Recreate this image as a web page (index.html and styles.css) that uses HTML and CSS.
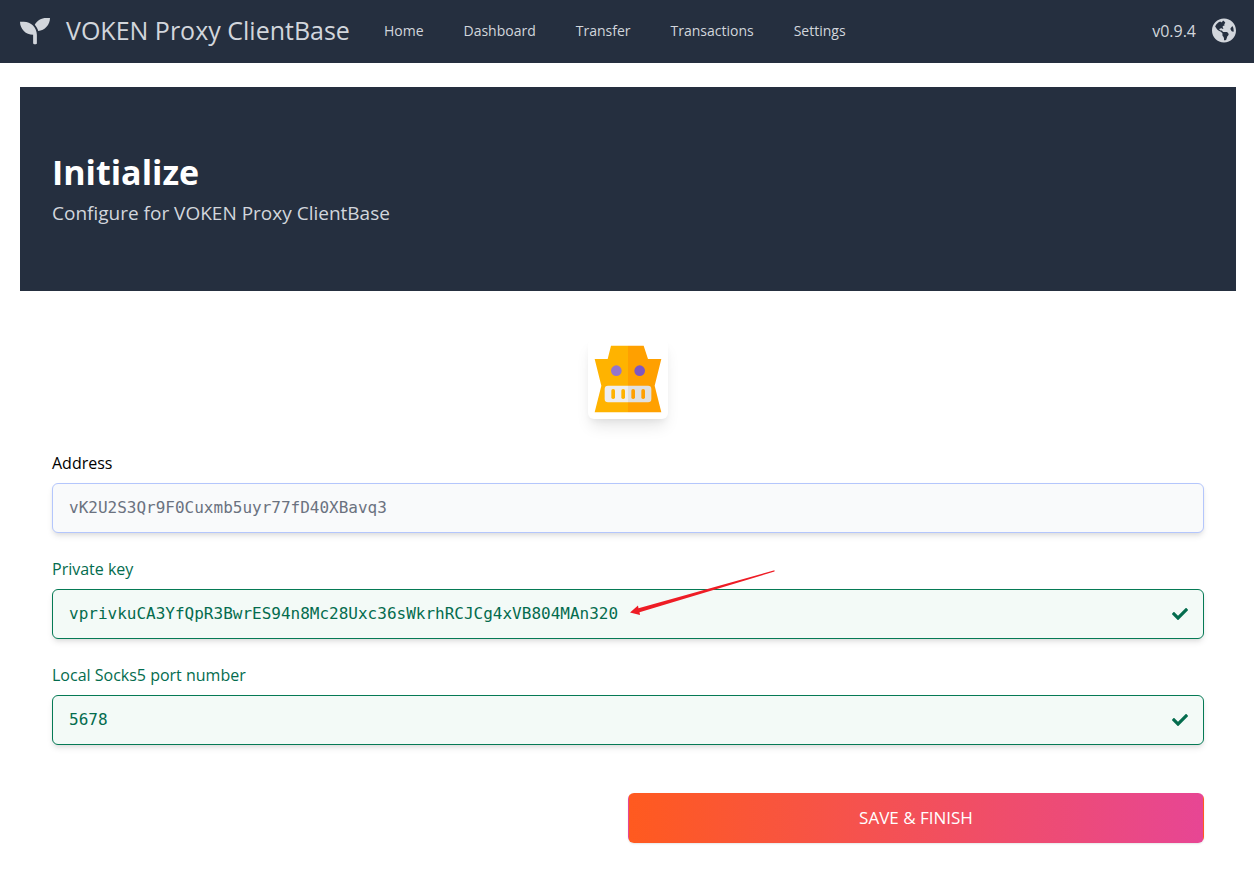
FILE: index.html
```html
<!DOCTYPE html>
<html lang="en">
<head>
<meta charset="utf-8">
<meta name="viewport" content="width=device-width, initial-scale=1">
<title>VOKEN Proxy ClientBase</title>
<link rel="stylesheet" href="styles.css">
</head>
<body>
<header class="navbar">
  <a class="brand" href="#">
    <svg class="brand-icon" viewBox="0 0 512 512" aria-hidden="true"><path fill="currentColor" d="M64 96H0c0 123.7 100.3 224 224 224v144c0 8.800 7.200 16 16 16h32c8.800 0 16-7.200 16-16V320C288 196.300 187.700 96 64 96zm384-64c-84.200 0-157.400 46.500-195.700 115.200 27.700 30.200 48.200 66.900 59 107.600C424 243.100 512 147.900 512 32h-64z"/></svg>
    <span class="brand-name">VOKEN Proxy ClientBase</span>
  </a>
  <nav class="nav-links">
    <a href="#">Home</a>
    <a href="#">Dashboard</a>
    <a href="#">Transfer</a>
    <a href="#">Transactions</a>
    <a href="#">Settings</a>
  </nav>
  <div class="nav-end">
    <span>v0.9.4</span>
    <button class="language" type="button" aria-label="Language">
      <svg viewBox="0 0 496 512" aria-hidden="true"><path fill="currentColor" d="M248 8C111.030 8 0 119.030 0 256s111.030 248 248 248 248-111.030 248-248S384.970 8 248 8zm82.290 357.600c-3.900 3.880-7.990 7.950-11.310 11.280-2.990 3-5.100 6.700-6.170 10.710-1.510 5.660-2.730 11.380-4.770 16.870l-17.390 46.850c-13.760 3-28 4.690-42.650 4.690v-27.380c1.690-12.620-7.640-36.260-22.630-51.250-6-6-9.370-14.140-9.370-22.630v-32.010c0-11.640-6.270-22.340-16.460-27.970-14.370-7.950-34.810-19.060-48.810-26.110-11.480-5.780-22.100-13.140-31.650-21.750l-.8-.72a114.792 114.792 0 0 1-18.060-20.740c-9.380-13.770-24.660-36.420-34.590-51.140 20.470-45.500 57.360-82.040 103.200-101.890l24.010 12.010C203.480 89.740 216 82.010 216 70.110v-11.300c7.990-1.290 16.120-2.110 24.390-2.420l28.300 28.300c6.250 6.250 6.250 16.380 0 22.630L264 112l-10.340 10.340c-3.120 3.120-3.120 8.190 0 11.310l4.690 4.690c3.120 3.120 3.120 8.190 0 11.310l-8 8a8.008 8.008 0 0 1-5.660 2.340h-8.990c-2.080 0-4.080.81-5.580 2.270l-9.920 9.650a8.008 8.008 0 0 0-1.580 9.310l15.590 31.190c2.660 5.320-1.210 11.580-7.150 11.580h-5.640c-1.930 0-3.790-.7-5.240-1.960l-9.280-8.060a16.017 16.017 0 0 0-15.550-3.100l-31.170 10.390a11.950 11.950 0 0 0-8.170 11.340c0 4.530 2.560 8.660 6.610 10.690l11.080 5.540c9.410 4.710 19.790 7.160 30.310 7.160s22.590 27.290 32 32h66.750c8.490 0 16.620 3.370 22.630 9.370l13.690 13.690a30.503 30.503 0 0 1 8.930 21.570 46.536 46.536 0 0 1-13.720 32.980zM417 274.250c-5.790-1.450-10.840-5-14.150-9.970l-17.980-26.970a23.970 23.970 0 0 1 0-26.620l19.590-29.380c2.320-3.470 5.500-6.290 9.240-8.150l12.980-6.490C440.200 193.590 448 223.870 448 256c0 8.670-.74 17.160-1.820 25.540L417 274.250z"/></svg>
    </button>
  </div>
</header>
<main class="page">
  <section class="hero">
    <h1>Initialize</h1>
    <p>Configure for VOKEN Proxy ClientBase</p>
  </section>
  <form class="setup">
    <svg class="avatar" viewBox="0 0 240 240" role="img" aria-label="Robot avatar">
      <path fill="#ffb300" d="M69 20H120V220H20L40 140 20 60H59z"/>
      <path fill="#ffa000" d="M120 20H167L180 60H220L200 140 220 220H120z"/>
      <circle cx="85" cy="95" r="16" fill="#9575cd"/>
      <circle cx="155" cy="95" r="16" fill="#7e57c2"/>
      <path fill="#eee" d="M120 140H60a10 10 0 0 0-10 10v30a10 10 0 0 0 10 10h60z"/>
      <path fill="#e0e0e0" d="M120 140h60a10 10 0 0 1 10 10v30a10 10 0 0 1-10 10h-60z"/>
      <g fill="#ffb300"><rect x="70" y="150" width="11" height="30" rx="5"/><rect x="100" y="150" width="11" height="30" rx="5"/></g>
      <g fill="#ffa000"><rect x="130" y="150" width="11" height="30" rx="5"/><rect x="160" y="150" width="11" height="30" rx="5"/></g>
    </svg>
    <div class="field">
      <label for="address">Address</label>
      <div class="control">
        <input id="address" type="text" value="vK2U2S3Qr9F0Cuxmb5uyr77fD40XBavq3" readonly>
      </div>
    </div>
    <div class="field valid">
      <label for="private-key">Private key</label>
      <div class="control">
        <input id="private-key" type="text" value="vprivkuCA3YfQpR3BwrES94n8Mc28Uxc36sWkrhRCJCg4xVB804MAn320" spellcheck="false">
        <svg class="check" viewBox="0 0 512 512" aria-hidden="true"><path fill="currentColor" d="M173.898 439.404l-166.400-166.400c-9.997-9.997-9.997-26.206 0-36.204l36.203-36.204c9.997-9.998 26.207-9.998 36.204 0L192 312.690 432.095 72.596c9.997-9.997 26.207-9.997 36.204 0l36.203 36.204c9.997 9.997 9.997 26.206 0 36.204l-294.400 294.401c-9.998 9.997-26.207 9.997-36.204-.001z"/></svg>
        <svg class="arrow" viewBox="0 0 146 46" aria-hidden="true"><path fill="#ee1c25" d="M0 42.500 8 35.500 8.500 38.300 144.500 .3 144.500 1.500 9.500 42.300 10 45z"/></svg>
      </div>
    </div>
    <div class="field valid">
      <label for="port">Local Socks5 port number</label>
      <div class="control">
        <input id="port" type="text" inputmode="numeric" value="5678">
        <svg class="check" viewBox="0 0 512 512" aria-hidden="true"><path fill="currentColor" d="M173.898 439.404l-166.400-166.400c-9.997-9.997-9.997-26.206 0-36.204l36.203-36.204c9.997-9.998 26.207-9.998 36.204 0L192 312.690 432.095 72.596c9.997-9.997 26.207-9.997 36.204 0l36.203 36.204c9.997 9.997 9.997 26.206 0 36.204l-294.400 294.401c-9.998 9.997-26.207 9.997-36.204-.001z"/></svg>
      </div>
    </div>
    <div class="actions">
      <button class="submit" type="submit">SAVE &amp; FINISH</button>
    </div>
  </form>
</main>
</body>
</html>
```
FILE: styles.css
```css
* {
  box-sizing: border-box;
}

body {
  margin: 0;
  background: #fff;
  color: #000;
  font: 16px/24px "Open Sans", "Noto Sans", sans-serif;
}

.navbar {
  display: flex;
  align-items: center;
  padding: 11px 18px 13px 20px;
  background: #252f3f;
  color: #d2d6dc;
}

.navbar a {
  color: inherit;
  text-decoration: none;
}

.brand {
  display: flex;
  align-items: center;
  gap: 16px;
}

.brand-icon {
  width: 30px;
  height: 30px;
}

.brand-name {
  font-size: 25px;
  line-height: 39px;
}

.nav-links {
  display: flex;
  gap: 40px;
  margin-left: 34px;
  font-size: 14px;
}

.nav-end {
  display: flex;
  align-items: center;
  gap: 16px;
  margin-left: auto;
}

.language {
  display: flex;
  padding: 0;
  border: 0;
  background: none;
  color: inherit;
}

.language svg {
  width: 24px;
  height: 25px;
}

.page {
  padding: 24px 18px 24px 20px;
}

.hero {
  padding: 64px 32px;
  background: #252f3f;
}

.hero h1 {
  margin: 0;
  color: #fff;
  font-size: 34px;
  line-height: 42px;
}

.hero p {
  margin: 6px 0 0;
  color: #d2d6dc;
  font-size: 19px;
  line-height: 28px;
}

.setup {
  display: flex;
  flex-direction: column;
  gap: 24px;
  padding: 48px 32px 0;
}

.avatar {
  align-self: center;
  width: 80px;
  height: 80px;
  margin-bottom: 8px;
  border-radius: 6px;
  background: #fff;
  box-shadow: 0 10px 15px -3px rgba(0, 0, 0, .1), 0 4px 6px -2px rgba(0, 0, 0, .05);
}

.field {
  display: flex;
  flex-direction: column;
  gap: 8px;
}

.control {
  position: relative;
}

.control input {
  display: block;
  width: 100%;
  height: 50px;
  padding: 11px 16px 13px;
  border: 1px solid #b4c6fc;
  border-radius: 6px;
  outline: 0;
  background: #f9fafb;
  box-shadow: 0 4px 6px -1px rgba(0, 0, 0, .1), 0 2px 4px -1px rgba(0, 0, 0, .06);
  color: #6b7280;
  font: 16px/24px "DejaVu Sans Mono", monospace;
}

.valid {
  color: #046c4e;
}

.valid input {
  padding-right: 48px;
  border-color: #057a55;
  background: #f3faf7;
  color: #046c4e;
}

.check {
  position: absolute;
  top: 17px;
  right: 16px;
  width: 16px;
  height: 16px;
}

.arrow {
  position: absolute;
  top: -19px;
  left: 578px;
  width: 146px;
  height: 46px;
  pointer-events: none;
}

.actions {
  display: grid;
  grid-template-columns: 1fr 1fr;
  margin-top: 24px;
}

.submit {
  grid-column: 2;
  height: 50px;
  border: 1px solid transparent;
  border-radius: 6px;
  background: linear-gradient(to right, #ff5a1f, #e74694);
  box-shadow: 0 1px 2px rgba(0, 0, 0, .1);
  color: #fff;
  font-family: inherit;
  font-size: 17px;
  line-height: 24px;
}
```
